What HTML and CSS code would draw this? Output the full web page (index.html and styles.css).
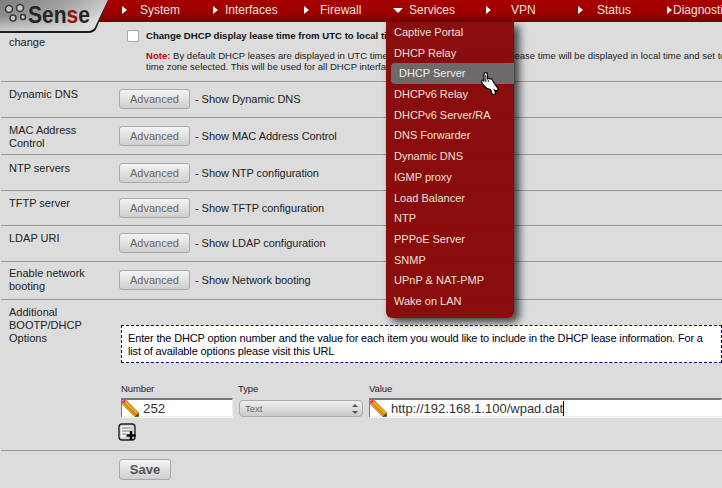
FILE: index.html
```html
<!DOCTYPE html>
<html lang="en">
<head>
<meta charset="utf-8">
<title>Services: DHCP server</title>
<link rel="stylesheet" href="styles.css">
</head>
<body>
<div class="page">
  <main class="content">
    <section class="row row-first">
      <div class="label">Time format<br>change</div>
      <div class="field field-first">
        <label class="check"><span class="box"></span><b>Change DHCP display lease time from UTC to local time.</b></label>
        <p class="note"><span class="note-key">Note:</span> By default DHCP leases are displayed in UTC time. By checking this box DHCP lease time will be displayed in local time and set to the<br>time zone selected. This will be used for all DHCP interfaces lease time.</p>
      </div>
    </section>
    <section class="row"><div class="label">Dynamic DNS</div><div class="field"><button class="btn">Advanced</button><span class="hint">- Show Dynamic DNS</span></div></section>
    <section class="row row-37 row-low"><div class="label">MAC Address<br>Control</div><div class="field"><button class="btn">Advanced</button><span class="hint">- Show MAC Address Control</span></div></section>
    <section class="row row-low"><div class="label label-low">NTP servers</div><div class="field"><button class="btn">Advanced</button><span class="hint">- Show NTP configuration</span></div></section>
    <section class="row row-35"><div class="label">TFTP server</div><div class="field"><button class="btn">Advanced</button><span class="hint">- Show TFTP configuration</span></div></section>
    <section class="row"><div class="label">LDAP URI</div><div class="field"><button class="btn">Advanced</button><span class="hint">- Show LDAP configuration</span></div></section>
    <section class="row row-38 row-low"><div class="label label-high">Enable network<br>booting</div><div class="field"><button class="btn">Advanced</button><span class="hint">- Show Network booting</span></div></section>
    <section class="row row-options">
      <div class="label">Additional<br>BOOTP/DHCP<br>Options</div>
      <div class="field field-options">
        <div class="infobox">Enter the DHCP option number and the value for each item you would like to include in the DHCP lease information. For a list of available options please visit this <span class="url">URL</span></div>
        <div class="option-grid">
          <div class="col-number">
            <div class="col-label">Number</div>
            <div class="input"><svg class="pencil" viewBox="0 0 18 18"><use href="#pencil-shape"/></svg><span>252</span></div>
          </div>
          <div class="col-type">
            <div class="col-label">Type</div>
            <div class="select"><span>Text</span><svg class="updown" viewBox="0 0 8 14"><path d="M1 5 4 2l3 3z" fill="#555"/><path d="M1 9h6l-3 3z" fill="#555"/></svg></div>
          </div>
          <div class="col-value">
            <div class="col-label">Value</div>
            <div class="input"><svg class="pencil" viewBox="0 0 18 18"><use href="#pencil-shape"/></svg><span class="value-text">http://192.168.1.100/wpad.dat</span></div>
          </div>
        </div>
        <svg class="add" viewBox="0 0 18 18">
          <rect x="1" y="1" width="16" height="16" rx="3" fill="#d4d4d4" stroke="#222" stroke-width="1.400"/>
          <rect x="3" y="3" width="9" height="11" fill="#f4f4f4"/>
          <path d="M4 5h8M4 8h8M4 11h4" stroke="#777" stroke-width="1.200"/>
          <path d="M13 8v9M8.500 12.500h9" stroke="#000" stroke-width="2.400"/>
        </svg>
      </div>
    </section>
    <section class="row-save"><button class="btn btn-save">Save</button></section>
  </main>

  <header class="topbar">
    <div class="logo">
      <svg class="logo-shape" viewBox="0 0 112 36">
        <defs>
          <linearGradient id="tab" x1="0" y1="0" x2="1" y2="0.5">
            <stop offset="0" stop-color="#7c7c7c"/><stop offset="0.55" stop-color="#a4a4a4"/><stop offset="1" stop-color="#dedede"/>
          </linearGradient>
          <linearGradient id="tabfade" x1="0" y1="0" x2="0" y2="1">
            <stop offset="0.5" stop-color="#dcdcdc" stop-opacity="0"/><stop offset="1" stop-color="#dcdcdc" stop-opacity=".75"/>
          </linearGradient>
        </defs>
        <path d="M0 0H108L97 27Q95 33 88 33H0Z" fill="#1c1c1c"/>
        <path d="M0 0H108L96 25Q94 31 87 31H0Z" fill="url(#tab)"/>
        <path d="M0 0H108L96 25Q94 31 87 31H0Z" fill="url(#tabfade)"/>
        <g fill="#c8c8c8" stroke="#3a3a3a" stroke-width="1.600">
          <circle cx="9" cy="9" r="3.500"/><circle cx="20" cy="8" r="3.500"/><circle cx="13" cy="18" r="3"/><circle cx="23" cy="17" r="2.500"/>
        </g>
        <text class="logo-text" x="28" y="23" textLength="62" lengthAdjust="spacingAndGlyphs">Sen<tspan class="logo-red">s</tspan>e</text>
      </svg>
    </div>
    <nav class="nav">
      <span class="nav-item nav-system"><i class="tri"></i><span>System</span></span>
      <span class="nav-item nav-interfaces"><i class="tri"></i><span>Interfaces</span></span>
      <span class="nav-item nav-firewall"><i class="tri"></i><span>Firewall</span></span>
      <span class="nav-item nav-services"><i class="tri tri-down"></i><span>Services</span></span>
      <span class="nav-item nav-vpn"><i class="tri"></i><span>VPN</span></span>
      <span class="nav-item nav-status"><i class="tri"></i><span>Status</span></span>
      <span class="nav-item nav-diag"><i class="tri"></i><span>Diagnostics</span></span>
    </nav>
  </header>

  <ul class="menu">
    <li>Captive Portal</li>
    <li>DHCP Relay</li>
    <li class="active">DHCP Server</li>
    <li>DHCPv6 Relay</li>
    <li>DHCPv6 Server/RA</li>
    <li>DNS Forwarder</li>
    <li>Dynamic DNS</li>
    <li>IGMP proxy</li>
    <li>Load Balancer</li>
    <li>NTP</li>
    <li>PPPoE Server</li>
    <li>SNMP</li>
    <li>UPnP &amp; NAT-PMP</li>
    <li>Wake on LAN</li>
  </ul>

  <svg class="cursor" viewBox="0 0 18 24">
    <path d="M3 3.500C3 1 6.500 1 6.500 3.500V8.500C6.500 7 9 7 9 8.500C9 7.500 11.500 7.500 11.500 9.500L12.500 11 17.500 18.500 15 20 13.500 19 15 22.500 11.500 23.800 9.500 18.500 6 17.500C3 15 .7 12.500 .7 10.500 .7 8.500 3 8.500 3 10.500Z" fill="#fff" stroke="#000" stroke-width="1.200"/>
    <path d="M4.800 4V11M7.300 9V11" stroke="#000" stroke-width=".9"/>
  </svg>

  <svg class="defs-holder" width="0" height="0">
    <defs>
      <g id="pencil-shape">
        <path d="M4.500 .5 17.500 13.500 17.500 17.500 13.500 17.500 .5 4.500Z" fill="#f7a81e" stroke="#9a6410" stroke-width=".8"/>
        <path d="M3 4 15 16" stroke="#d08412" stroke-width="1.600"/>
        <path d="M13.500 17.500H17.500V13.500Z" fill="#5c3c10"/>
        <path d="M4.500 .5 .5 4.500 0 1 1.500 0Z" fill="#e0305a"/>
      </g>
    </defs>
  </svg>
</div>
</body>
</html>
```
FILE: styles.css
```css
* { box-sizing: border-box; }
html, body { margin: 0; padding: 0; }
body { font-family: "Liberation Sans", Arial, sans-serif; font-size: 11px; color: #222; }
.page { position: relative; width: 722px; height: 488px; overflow: hidden; background: #dcdcdc; }

.content { padding-top: 20px; }
.row { display: flex; height: 36px; border-bottom: 1px solid #999; margin-left: 1px; }
.row-first { height: 62px; }
.row-35 { height: 35px; }
.row-37 { height: 37px; }
.row-38 { height: 38px; }
.row-options { height: 151px; }
.label { width: 118px; flex: none; padding: 6px 0 0 8px; line-height: 13px; color: #222; }
.row-first .label { padding-top: 3px; }
.label-low { padding-top: 7px; }
.label-high { padding-top: 5px; }
.field { flex: 1; display: flex; align-items: center; min-width: 0; height: 20px; margin-top: 7px; }
.row-low .field { margin-top: 8px; }
.field-first { display: block; height: auto; margin-top: 0; padding-left: 8px; }
.check { display: flex; align-items: center; height: 13px; margin-top: 9px; font-size: 9.600px; white-space: nowrap; color: #111; }
.box { width: 12px; height: 12px; margin-right: 7px; background: #fff; border: 1px solid #aaa; border-radius: 2px; flex: none; }
.note { margin: 8px 0 0 19px; font-size: 9.550px; line-height: 11px; white-space: nowrap; color: #222; }
.note-key { color: #c00; font-weight: bold; }

.btn { font: 11px "Liberation Sans", Arial, sans-serif; color: #666; width: 71px; height: 20px; padding: 0; border: 1px solid #aaa; border-radius: 3px; background: linear-gradient(#f4f4f4, #cfcfcf); flex: none; }
.hint { margin-left: 5px; color: #222; white-space: nowrap; letter-spacing: -.05px; }

.field-options { display: block; height: auto; margin-top: 0; padding-left: 2px; min-width: 0; }
.infobox { width: 601px; height: 38px; margin-top: 25px; padding: 6px 6px 0; background: #fff; border: 1px dashed #000066; color: #001; line-height: 13px; letter-spacing: -.15px; }
.url { color: #001; }
.option-grid { display: flex; margin-top: 20px; }
.col-label { font-size: 9.500px; line-height: 11px; color: #223; letter-spacing: -.1px; }
.col-number { width: 117px; }
.col-type { width: 131px; }
.col-value { width: 353px; }
.input { display: flex; align-items: center; height: 20px; margin-top: 4px; background: #fff; border-top: 2px solid #777; border-left: 1px solid #777; border-right: 1px solid #f2f2f2; border-bottom: 2px solid #f2f2f2; font-size: 13.300px; color: #333; }
.col-number .input { width: 112px; }
.pencil { width: 17px; height: 17px; flex: none; margin: 0 4px 0 0; }
.value-text { border-right: 1px solid #000; font-size: 13px; line-height: 15px; }
.select { display: flex; align-items: center; justify-content: space-between; width: 124px; height: 17px; margin: 6px 0 0 1px; padding: 0 3px 0 5px; border: 1px solid #aaa; border-radius: 4px; background: linear-gradient(#efefef, #cacaca); font-size: 9.500px; color: #666; }
.updown { width: 8px; height: 14px; }
.add { display: block; width: 18px; height: 18px; margin: 5px 0 0 -3px; }
.row-save { padding: 8px 0 0 119px; }
.btn-save { width: 52px; height: 21px; font-size: 13px; font-weight: bold; color: #555; }

.topbar { position: absolute; top: 0; left: 0; width: 722px; height: 22px; background: linear-gradient(#a80000, #9c0000 60%, #780000); }
.logo { position: absolute; top: 0; left: 0; width: 112px; height: 36px; z-index: 1; }
.logo-shape { display: block; width: 112px; height: 36px; }
.logo-text { font: bold 23px "Liberation Sans", Arial, sans-serif; fill: #262626; }
.logo-red { fill: #8e1414; }
.nav { display: flex; padding: 2px 0 0 122px; height: 22px; white-space: nowrap; color: #f0e2dc; font-size: 12px; line-height: 16px; }
.nav-item { display: flex; align-items: center; flex: none; width: 91px; height: 16px; }
.tri { width: 0; height: 0; flex: none; border-left: 5px solid #fff; border-top: 4px solid transparent; border-bottom: 4px solid transparent; }
.tri-down { margin-left: -3px; border-top: 5px solid #fff; border-bottom: 0; border-left: 5px solid transparent; border-right: 5px solid transparent; }
.nav-system span { margin-left: 13px; }
.nav-interfaces span { margin-left: 7px; }
.nav-firewall span { margin-left: 11px; }
.nav-services span { margin-left: 6px; }
.nav-vpn span { margin-left: 20px; }
.nav-status span { margin-left: 14px; }
.nav-diag span { margin-left: 1px; }
.nav-firewall { width: 92px; }
.nav-services { width: 90px; }
.nav-vpn { width: 92px; }
.nav-status { width: 89px; }

.menu { position: absolute; left: 386px; top: 22px; width: 128px; height: 296px; margin: 0; padding: 0; list-style: none; background: rgba(134, 6, 6, .97); border-radius: 0 0 6px 6px; box-shadow: 5px 4px 9px rgba(0, 0, 0, .75); color: #f2e0d8; }
.menu li { height: 20.700px; line-height: 20.700px; padding-left: 8px; }
.menu .active { margin-left: 5px; padding-left: 8px; background: #6e6a6a; border-radius: 4px 0 0 4px; color: #eee; }
.cursor { position: absolute; left: 481px; top: 71px; width: 18px; height: 24px; }
.defs-holder { position: absolute; }
```
